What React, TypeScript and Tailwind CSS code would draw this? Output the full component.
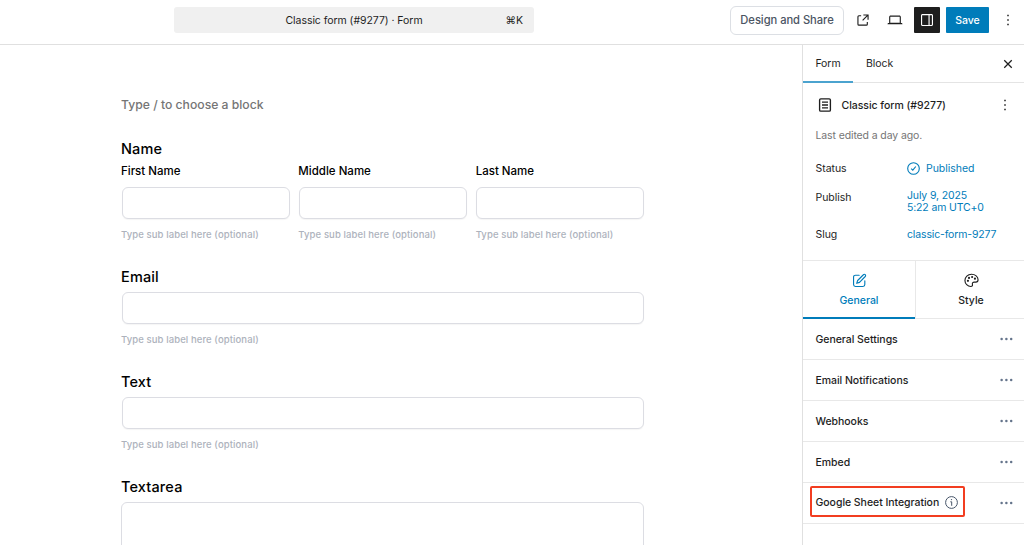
import React, { useState } from "react";

const DotsVertical: React.FC = () => (
  <svg width="18" height="18" viewBox="0 0 24 24" fill="#1e1e1e">
    <path d="M13 19h-2v-2h2v2zm0-6h-2v-2h2v2zm0-6h-2V5h2v2z" />
  </svg>
);

const DotsHorizontal: React.FC = () => (
  <svg width="13" height="4" viewBox="0 0 13 4" fill="#64748b">
    <circle cx="1.6" cy="2" r="1.25" />
    <circle cx="6.4" cy="2" r="1.25" />
    <circle cx="11.2" cy="2" r="1.25" />
  </svg>
);

const TopBar: React.FC = () => (
  <header className="flex h-[45px] shrink-0 items-center border-b border-[#e0e0e0] pb-[4px]">
    <div className="ml-[174px] flex h-[26px] w-[360px] items-center rounded-[3px] bg-[#f0f0f0] pt-px text-[10.5px] text-[#1e1e1e]">
      <span className="w-[48px]"></span>
      <span className="flex-1 text-center tracking-[-0.05px]">Classic form (#9277) · Form</span>
      <span className="w-[48px] pr-[11px] text-right">⌘K</span>
    </div>
    <div className="ml-auto flex items-center pr-[7px]">
      <button className="h-[29px] w-[114px] rounded-[6px] border border-[#dcdfe4] pt-px text-[11.2px] font-medium tracking-[-0.05px] whitespace-nowrap text-[#4b5563]">
        Design and Share
      </button>
      <svg className="ml-[10px]" width="18" height="18" viewBox="0 0 24 24" fill="#1e1e1e">
        <path d="M19.5 4.5h-7V6h4.44l-5.97 5.97 1.06 1.06L18 7.06v4.44h1.5v-7Zm-13 1a2 2 0 0 0-2 2v10a2 2 0 0 0 2 2h10a2 2 0 0 0 2-2v-3H17v3a.5.5 0 0 1-.5.5h-10a.5.5 0 0 1-.5-.5v-10a.5.5 0 0 1 .5-.5h3V5.5h-3Z" />
      </svg>
      <svg className="ml-[14px]" width="18" height="18" viewBox="0 0 24 24" fill="#1e1e1e">
        <path d="M20.5 16h-.7V8c0-1.1-.9-2-2-2H6.2c-1.1 0-2 .9-2 2v8h-.7c-.8 0-1.5.7-1.5 1.5h20c0-.8-.7-1.5-1.5-1.5zM5.7 8c0-.3.2-.5.5-.5h11.6c.3 0 .5.2.5.5v7.6H5.7V8z" />
      </svg>
      <button className="ml-[10px] flex h-[26px] w-[26px] items-center justify-center rounded-[1px] bg-[#1e1e1e]">
        <svg width="18" height="18" viewBox="0 0 24 24" fill="#ffffff">
          <path d="M18 4H6c-1.1 0-2 .9-2 2v12c0 1.1.9 2 2 2h12c1.1 0 2-.9 2-2V6c0-1.1-.9-2-2-2zm-4 14.5H6c-.3 0-.5-.2-.5-.5V6c0-.3.2-.5.5-.5h8v13zm4.5-.5c0 .3-.2.5-.5.5h-2.5v-13H18c.3 0 .5.2.5.5v12z" />
        </svg>
      </button>
      <button className="ml-[6px] h-[26px] w-[43px] rounded-[1px] bg-[#007cba] pt-px text-[10.5px] font-medium tracking-[-0.05px] text-white">
        Save
      </button>
      <button className="ml-[10px]">
        <DotsVertical />
      </button>
    </div>
  </header>
);

const SubLabel: React.FC = () => (
  <p className="mt-[9px] h-[14px] text-[9.5px] leading-[14px] font-medium tracking-[0.1px] whitespace-nowrap text-[#adb2bc]">
    Type sub label here (optional)
  </p>
);

const inputClasses =
  "h-[32px] rounded-[6px] border border-[#dcdde3] bg-white shadow-[0_1px_1px_rgba(0,0,0,0.04)] outline-none";

const titleClasses = "h-[20px] text-[14.5px] leading-[20px] font-medium tracking-[0.15px] text-black";

const FormCanvas: React.FC = () => (
  <main className="flex-1 overflow-hidden pl-[121px]">
    <div className="w-[523px] pt-[51px]">
      <p className="h-[18px] text-[12.2px] leading-[18px] font-medium text-[#757575]">
        Type / to choose a block
      </p>

      <h2 className={`mt-[25px] ${titleClasses}`}>Name</h2>
      <div className="mt-[4px] grid grid-cols-3 gap-[9px]">
        {["First Name", "Middle Name", "Last Name"].map((label) => (
          <div key={label}>
            <label className="block h-[16px] text-[11.5px] leading-[17px] font-medium text-black">
              {label}
            </label>
            <input className={`mt-[8px] ml-[0.5px] block w-full ${inputClasses}`} />
            <SubLabel />
          </div>
        ))}
      </div>

      {["Email", "Text"].map((label) => (
        <div key={label} className="mt-[25px]">
          <h2 className={titleClasses}>{label}</h2>
          <input className={`mt-[5px] ml-px block w-[522px] ${inputClasses}`} />
          <SubLabel />
        </div>
      ))}

      <h2 className={`mt-[25px] ${titleClasses}`}>Textarea</h2>
      <textarea className="mt-[5px] block h-[100px] w-full resize-none rounded-[6px] border border-[#dcdde3] outline-none" />
    </div>
  </main>
);

const settings = [
  "General Settings",
  "Email Notifications",
  "Webhooks",
  "Embed",
  "Google Sheet Integration",
];

const Sidebar: React.FC = () => {
  const [activeTab, setActiveTab] = useState<"general" | "style">("general");

  return (
    <aside className="w-[222px] shrink-0 border-l border-[#e0e0e0] text-[10.5px] tracking-[-0.04px] text-[#1e1e1e]">
      <div className="flex h-[38px] border-b border-[#e4e4e4]">
        <button className="-mb-px h-[38px] w-[50px] border-b-2 border-[#4ba3cf] pt-[2px]">Form</button>
        <button className="ml-[13px]">Block</button>
        <button className="mr-[7px] ml-auto">
          <svg width="18" height="18" viewBox="0 0 24 24" fill="none" stroke="#1e1e1e" strokeWidth="1.7">
            <path d="m7 7 10 10M17 7 7 17" />
          </svg>
        </button>
      </div>

      {/* Form summary */}
      <div className="h-[177px] pt-[13px] pl-[12.5px]">
        <div className="flex h-[18px] items-center pr-[10px]">
          <svg width="18" height="18" viewBox="0 0 24 24" fill="none" stroke="#1e1e1e">
            <rect x="4.8" y="3.8" width="14.4" height="16.4" rx="1.6" strokeWidth="1.8" />
            <path d="M8 8.2h8M8 12h8M8 15.8h8" strokeWidth="1.7" />
          </svg>
          <h3 className="ml-[8px] pt-px font-medium">Classic form (#9277)</h3>
          <button className="ml-auto">
            <DotsVertical />
          </button>
        </div>
        <p className="mt-[14px] h-[16px] leading-[16px] tracking-[-0.12px] text-[#757575]">
          Last edited a day ago.
        </p>
        <dl className="mt-[17px] grid grid-cols-[91.5px_1fr] leading-[16px]">
          <dt>Status</dt>
          <dd className="flex items-center text-[#007cba]">
            <svg className="-mt-px" width="13" height="13" viewBox="0 0 13 13" fill="none" stroke="currentColor">
              <circle cx="6.5" cy="6.5" r="5.8" strokeWidth="1.1" />
              <path d="m4.2 6.7 1.6 1.5 3-3.7" strokeWidth="1.1" />
            </svg>
            <span className="ml-[6px]">Published</span>
          </dd>
          <dt className="mt-[13px]">Publish</dt>
          <dd className="mt-[13px] leading-[12px] tracking-[-0.15px] text-[#007cba]">
            July 9, 2025
            <br />
            5:22 am UTC+0
          </dd>
          <dt className="mt-[13px]">Slug</dt>
          <dd className="mt-[13px] tracking-[-0.15px] text-[#007cba]">classic-form-9277</dd>
        </dl>
      </div>

      {/* Settings tabs */}
      <div className="flex h-[59px] border-y border-[#e8e8e8] font-medium">
        <button
          onClick={() => setActiveTab("general")}
          className={`-mb-px flex w-[112px] flex-col items-center border-b-2 pt-[12px] ${
            activeTab === "general" ? "border-[#007cba] text-[#007cba]" : "border-transparent"
          }`}
        >
          <svg width="15" height="15" viewBox="0 0 24 24" fill="none" stroke="currentColor" strokeWidth="1.8" strokeLinecap="round" strokeLinejoin="round">
            <path d="M11.5 3.5H5.5A3 3 0 0 0 2.500 6.500v12a3 3 0 0 0 3 3h12a3 3 0 0 0 3-3v-6" />
            <path d="M18.200 2.800a2 2 0 0 1 3 2.800L12 15l-4.500 1.500L9 12Z" />
          </svg>
          <span className="mt-[5px] leading-[16px]">General</span>
        </button>
        <button
          onClick={() => setActiveTab("style")}
          className={`-mb-px flex flex-1 flex-col items-center border-b-2 border-l border-l-[#e8e8e8] pt-[12px] pl-[2px] ${
            activeTab === "style" ? "border-b-[#007cba] text-[#007cba]" : "border-b-transparent"
          }`}
        >
          <svg width="15" height="15" viewBox="0 0 24 24" fill="none" stroke="currentColor" strokeWidth="1.8" strokeLinejoin="round">
            <path d="M11 21.500c2 0 3-1.200 2.500-3-.6-2.300.5-4 3-4h2.500c2.200 0 3.500-1.400 3.500-3.700C22.500 6 18 2 12 2S1.500 6.400 1.500 12c0 5.300 4.300 9.500 9.500 9.500Z" />
            <g fill="currentColor" stroke="none">
              <circle cx="6.3" cy="12.5" r="1.7" />
              <circle cx="8" cy="7.8" r="1.7" />
              <circle cx="13" cy="6.3" r="1.7" />
              <circle cx="17.5" cy="9" r="1.7" />
            </g>
          </svg>
          <span className="mt-[5px] leading-[16px]">Style</span>
        </button>
      </div>

      {settings.map((name) => (
        <div
          key={name}
          className="flex h-[41px] items-center border-b border-[#e8e8e8] pr-[11px] pl-[12.5px] font-medium"
        >
          {name === "Google Sheet Integration" ? (
            <div className="-mt-[3px] -ml-[5.5px] flex h-[31px] w-[155px] shrink-0 items-center rounded-[2px] border-2 border-[#f23d20] pt-[2px] pl-[3.5px]">
              <span className="whitespace-nowrap">{name}</span>
              <svg className="ml-[6px] shrink-0" width="13" height="13" viewBox="0 0 13 13" fill="none" stroke="#475569">
                <circle cx="6.5" cy="6.5" r="5.9" />
                <path d="M5.3 5.8h1.4v4" />
                <circle cx="6.5" cy="3.6" r=".7" fill="#475569" stroke="none" />
              </svg>
            </div>
          ) : (
            <span className="pt-px">{name}</span>
          )}
          <button className="ml-auto">
            <DotsHorizontal />
          </button>
        </div>
      ))}
    </aside>
  );
};

const App: React.FC = () => (
  <div className="flex h-[545px] w-[1024px] flex-col overflow-hidden bg-white font-['Inter',sans-serif]">
    <TopBar />
    <div className="flex min-h-0 flex-1">
      <FormCanvas />
      <Sidebar />
    </div>
  </div>
);

export default App;
